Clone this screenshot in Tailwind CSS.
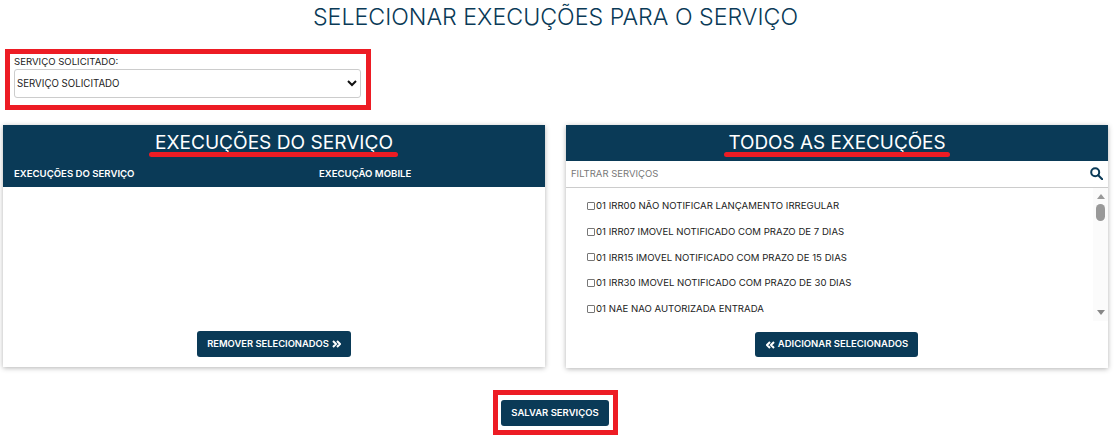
<!DOCTYPE html>
<html lang="pt-BR">
<head>
    <meta charset="UTF-8">
    <title>Selecionar execuções para o serviço</title>
    <script src="https://cdn.jsdelivr.net/npm/@tailwindcss/browser@4"></script>
</head>
<body class="bg-white font-['Inter',sans-serif] text-black overflow-hidden">
    <div class="h-[436px] w-[1116px] flex flex-col">

        <!-- Title -->
        <h1 class="h-[35px] leading-[35px] text-center text-[23.2px] font-light text-[#0a3a57] pr-[5px]">SELECIONAR EXECUÇÕES PARA O SERVIÇO</h1>

        <!-- Service select -->
        <div class="mt-[14px] ml-[5px] w-[366px] h-[61px] border-[5px] border-[#ed1c24] pl-[4px] pr-[5px] pt-[1px]">
            <label class="block h-[13px] leading-[13px] text-[9.6px] text-[#222]">SERVIÇO SOLICITADO:</label>
            <div class="relative mt-[1px] w-[347px]">
                <select class="block appearance-none w-full h-[29px] border border-[#ccc] rounded-[3px] bg-white text-[9.7px] text-[#222] pl-[2px] pt-[2px]">
                    <option>SERVIÇO SOLICITADO</option>
                </select>
                <svg class="absolute right-[4px] top-[11px] w-[10px] h-[7px] pointer-events-none" viewBox="0 0 10 7" fill="none" stroke="#111" stroke-width="2"><path d="M1 1l4 4 4-4"/></svg>
            </div>
        </div>

        <!-- Panels -->
        <div class="mt-[15px] pl-[3px] flex gap-[21px] items-start">
            <section class="w-[542px] h-[242px] bg-white shadow-[0_1px_5px_rgba(0,0,0,0.3)] flex flex-col">
                <div class="h-[62px] bg-[#0a3a57] text-white">
                    <h2 class="h-[36px] leading-[35px] text-center text-[19.1px]">
                        <span class="relative inline-block">EXECUÇÕES DO SERVIÇO
                            <span class="absolute left-[-6px] right-[-5px] top-[27px] h-[5px] rounded-full bg-[#ed1c24]"></span>
                        </span>
                    </h2>
                    <div class="flex h-[26px] items-center text-[9.6px] font-semibold">
                        <span class="ml-[11px] w-[305px]">EXECUÇÕES DO SERVIÇO</span>
                        <span>EXECUÇÃO MOBILE</span>
                    </div>
                </div>
                <div class="flex-1"></div>
                <div class="flex justify-center pb-[10px]">
                    <button class="h-[26px] w-[154px] rounded-[3px] bg-[#0a3a57] text-white text-[9.4px] font-semibold flex items-center justify-center gap-[3px]">
                        REMOVER SELECIONADOS
                        <svg class="w-[9px] h-[8px]" viewBox="0 0 9 8" fill="none" stroke="currentColor" stroke-width="2"><path d="M1 1l3 3-3 3M5 1l3 3-3 3"/></svg>
                    </button>
                </div>
            </section>

            <section class="w-[542px] h-[243px] bg-white shadow-[0_1px_5px_rgba(0,0,0,0.3)] flex flex-col">
                <div class="h-[36px] bg-[#0a3a57] text-white">
                    <h2 class="h-[36px] leading-[35px] text-center text-[18.9px]">
                        <span class="relative inline-block">TODOS AS EXECUÇÕES
                            <span class="absolute left-[-4px] right-[-4px] top-[27px] h-[5px] rounded-full bg-[#ed1c24]"></span>
                        </span>
                    </h2>
                </div>
                <div class="h-[27px] border-b border-[#ccc] flex items-center justify-between pl-[5px] pr-[5px]">
                    <span class="text-[9.5px] text-[#777]">FILTRAR SERVIÇOS</span>
                    <svg class="w-[13px] h-[13px] -mt-[2px]" viewBox="0 0 13 13" fill="none" stroke="#0a3a57" stroke-width="2"><circle cx="5.2" cy="5.2" r="4"/><path d="M8.2 8.2l4 4" stroke-linecap="round"/></svg>
                </div>
                <div class="flex h-[133px]">
                    <ul class="flex-1 pl-[21px] pt-[5.5px] text-[9.6px] text-[#222]">
                        <li class="h-[25.7px] flex items-center gap-[1px]"><input type="checkbox" class="appearance-none w-[8px] h-[8px] border border-[#777] rounded-[1px] -mt-[1px]">01 IRR00 NÃO NOTIFICAR LANÇAMENTO IRREGULAR</li>
                        <li class="h-[25.7px] flex items-center gap-[1px]"><input type="checkbox" class="appearance-none w-[8px] h-[8px] border border-[#777] rounded-[1px] -mt-[1px]">01 IRR07 IMOVEL NOTIFICADO COM PRAZO DE 7 DIAS</li>
                        <li class="h-[25.7px] flex items-center gap-[1px]"><input type="checkbox" class="appearance-none w-[8px] h-[8px] border border-[#777] rounded-[1px] -mt-[1px]">01 IRR15 IMOVEL NOTIFICADO COM PRAZO DE 15 DIAS</li>
                        <li class="h-[25.7px] flex items-center gap-[1px]"><input type="checkbox" class="appearance-none w-[8px] h-[8px] border border-[#777] rounded-[1px] -mt-[1px]">01 IRR30 IMOVEL NOTIFICADO COM PRAZO DE 30 DIAS</li>
                        <li class="h-[25.7px] flex items-center gap-[1px]"><input type="checkbox" class="appearance-none w-[8px] h-[8px] border border-[#777] rounded-[1px] -mt-[1px]">01 NAE NAO AUTORIZADA ENTRADA</li>
                    </ul>
                    <div class="w-[15px] bg-[#fbfbfb] flex flex-col items-center pt-[6px] pb-[6px]">
                        <div class="w-0 h-0 border-x-[4.5px] border-x-transparent border-b-[5px] border-b-[#999]"></div>
                        <div class="mt-[5px] w-[9px] h-[17px] rounded-full bg-[#999]"></div>
                        <div class="mt-auto w-0 h-0 border-x-[4.5px] border-x-transparent border-t-[5px] border-t-[#888]"></div>
                    </div>
                </div>
                <div class="flex justify-center mt-[11px] pr-[2px]">
                    <button class="h-[25px] w-[163px] rounded-[3px] bg-[#0a3a57] text-white text-[9.5px] font-semibold flex items-center justify-center gap-[3px] pl-[2px]">
                        <svg class="w-[9px] h-[8px]" viewBox="0 0 9 8" fill="none" stroke="currentColor" stroke-width="2"><path d="M4 1L1 4l3 3M8 1L5 4l3 3"/></svg>
                        ADICIONAR SELECIONADOS
                    </button>
                </div>
            </section>
        </div>

        <!-- Save -->
        <div class="mt-[22px] flex justify-center pr-[5px]">
            <div class="w-[125px] h-[45px] border-[5px] border-[#ed1c24] pl-[3px] pt-[5px]">
                <button class="block h-[26px] w-[108px] rounded-[3px] bg-[#0a3a57] text-white text-[9.5px] font-semibold">SALVAR SERVIÇOS</button>
            </div>
        </div>
    </div>
</body>
</html>
